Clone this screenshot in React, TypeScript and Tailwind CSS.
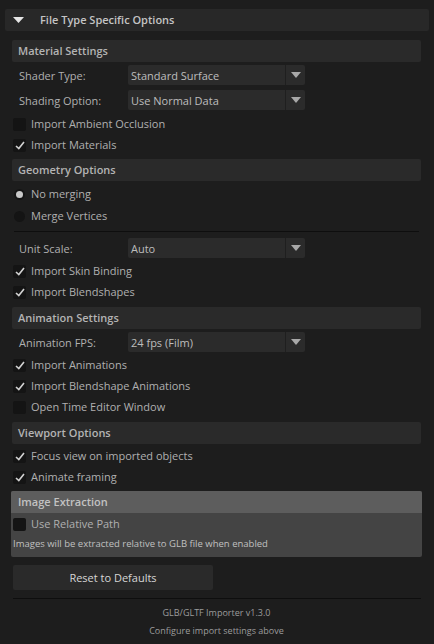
import { useState } from 'react';

const font = { fontFamily: '"Open Sans", "Noto Sans", "DejaVu Sans", sans-serif' };

function SectionHeader({ title }: { title: string }) {
  return (
    <div className="h-[22px] flex items-center pl-[6px] pt-[1px] bg-[#2a2a2a] rounded-[2px] text-[11px] font-semibold text-[#b4b4b4]">
      {title}
    </div>
  );
}

function SelectRow({ label, value, className = '' }: { label: string; value: string; className?: string }) {
  return (
    <div className={`flex items-center h-[20px] ${className}`}>
      <span className="w-[116px] pl-[7px] pt-[2px] text-[11px] text-[#b0b0b0]">{label}</span>
      <div className="flex h-[20px] w-[177px] bg-[#2b2b2b] rounded-[2px]">
        <span className="flex-1 flex items-center pl-[3px] pt-[2px] text-[11px] text-[#bdbdbd]">{value}</span>
        <div className="w-[20px] flex items-center justify-center border-l border-[#1f1f1f]">
          <svg width="10" height="6" viewBox="0 0 10 6">
            <path d="M0 0 L10 0 L5 6 Z" fill="#a8a8a8" />
          </svg>
        </div>
      </div>
    </div>
  );
}

function CheckRow({
  label,
  checked,
  onToggle,
  className = '',
}: {
  label: string;
  checked: boolean;
  onToggle: () => void;
  className?: string;
}) {
  return (
    <div className={`flex items-center h-[21px] pl-[1px] cursor-pointer ${className}`} onClick={onToggle}>
      <div className="w-[13px] h-[13px] bg-[#141414] rounded-[2px] flex items-center justify-center">
        {checked && (
          <svg width="10" height="9" viewBox="0 0 10 9">
            <path d="M1 5 L3.8 7.6 L9 1" fill="none" stroke="#d2d2d2" strokeWidth="1.6" />
          </svg>
        )}
      </div>
      <span className="ml-[5px] text-[11px] text-[#b0b0b0]">{label}</span>
    </div>
  );
}

function RadioRow({ label, selected, onSelect, className = '' }: { label: string; selected: boolean; onSelect: () => void; className?: string }) {
  return (
    <div className={`flex items-center h-[22px] pl-[2px] cursor-pointer ${className}`} onClick={onSelect}>
      <div className="w-[11px] h-[11px] rounded-full bg-[#141414] flex items-center justify-center">
        {selected && <div className="w-[7px] h-[7px] rounded-full bg-[#c8c8c8]" />}
      </div>
      <span className="ml-[6px] text-[11px] text-[#b0b0b0]">{label}</span>
    </div>
  );
}

export default function App() {
  const [opts, setOpts] = useState({
    ambient: false,
    materials: true,
    skin: true,
    blend: true,
    anims: true,
    blendAnims: true,
    timeEditor: false,
    focus: true,
    framing: true,
    relPath: false,
  });
  const [merge, setMerge] = useState<'none' | 'vertices'>('none');
  const toggle = (k: keyof typeof opts) => setOpts((o) => ({ ...o, [k]: !o[k] }));

  return (
    <div className="min-h-screen bg-[#1d1d1d] pt-[9px] pb-[10px]" style={font}>
      {/* Header */}
      <div className="mx-[5px] h-[22px] bg-[#282828] rounded-[2px] flex items-center">
        <svg width="11" height="6" viewBox="0 0 11 6" className="ml-[8px]">
          <path d="M0 0 L11 0 L5.5 6 Z" fill="#e6e6e6" />
        </svg>
        <span className="ml-[16px] pt-[1px] text-[11px] font-semibold text-[#c4c4c4]">File Type Specific Options</span>
      </div>

      <div className="mx-[12px] mr-[13px] mt-[9px] flex flex-col">
        {/* Material Settings */}
        <SectionHeader title="Material Settings" />
        <SelectRow label="Shader Type:" value="Standard Surface" className="mt-[3px]" />
        <SelectRow label="Shading Option:" value="Use Normal Data" className="mt-[5px]" />
        <CheckRow label="Import Ambient Occlusion" checked={opts.ambient} onToggle={() => toggle('ambient')} className="mt-[4px]" />
        <CheckRow label="Import Materials" checked={opts.materials} onToggle={() => toggle('materials')} />

        {/* Geometry Options */}
        <div className="mt-[3px]">
          <SectionHeader title="Geometry Options" />
        </div>
        <RadioRow label="No merging" selected={merge === 'none'} onSelect={() => setMerge('none')} className="mt-[2px]" />
        <RadioRow label="Merge Vertices" selected={merge === 'vertices'} onSelect={() => setMerge('vertices')} />
        <div className="mt-[4px] mx-[2px] h-px bg-[#0e0e0e]" />
        <SelectRow label="Unit Scale:" value="Auto" className="mt-[6px]" />
        <CheckRow label="Import Skin Binding" checked={opts.skin} onToggle={() => toggle('skin')} className="mt-[3px]" />
        <CheckRow label="Import Blendshapes" checked={opts.blend} onToggle={() => toggle('blend')} />

        {/* Animation Settings */}
        <div className="mt-[4px]">
          <SectionHeader title="Animation Settings" />
        </div>
        <SelectRow label="Animation FPS:" value="24 fps (Film)" className="mt-[3px]" />
        <CheckRow label="Import Animations" checked={opts.anims} onToggle={() => toggle('anims')} className="mt-[3px]" />
        <CheckRow label="Import Blendshape Animations" checked={opts.blendAnims} onToggle={() => toggle('blendAnims')} />
        <CheckRow label="Open Time Editor Window" checked={opts.timeEditor} onToggle={() => toggle('timeEditor')} />

        {/* Viewport Options */}
        <div className="mt-[4px]">
          <SectionHeader title="Viewport Options" />
        </div>
        <CheckRow label="Focus view on imported objects" checked={opts.focus} onToggle={() => toggle('focus')} className="mt-[2px]" />
        <CheckRow label="Animate framing" checked={opts.framing} onToggle={() => toggle('framing')} />

        {/* Image Extraction */}
        <div className="mt-[3px] -mx-[1px] bg-[#444444] rounded-[2px] pb-[6px]">
          <div className="h-[22px] flex items-center pl-[7px] pt-[1px] bg-[#5d5d5d] rounded-t-[2px] text-[11px] font-semibold text-[#c2c2c2]">
            Image Extraction
          </div>
          <CheckRow label="Use Relative Path" checked={opts.relPath} onToggle={() => toggle('relPath')} className="pl-[2px] h-[23px]" />
          <p className="pl-[2px] mt-[1px] text-[9.5px] leading-[14px] text-[#c0c0c0]">
            Images will be extracted relative to GLB file when enabled
          </p>
        </div>

        {/* Reset */}
        <button className="mt-[8px] ml-[1px] w-[200px] h-[25px] pt-[1px] bg-[#2a2a2a] rounded-[2px] text-[11px] text-[#d6d6d6]">
          Reset to Defaults
        </button>

        <div className="mt-[8px] ml-[1px] h-px bg-[#0e0e0e]" />

        <div className="mt-[5px] flex flex-col items-center text-[9px] text-[#9c9c9c]">
          <span className="leading-[18px]">GLB/GLTF Importer v1.3.0</span>
          <span className="leading-[18px]">Configure import settings above</span>
        </div>
      </div>
    </div>
  );
}
